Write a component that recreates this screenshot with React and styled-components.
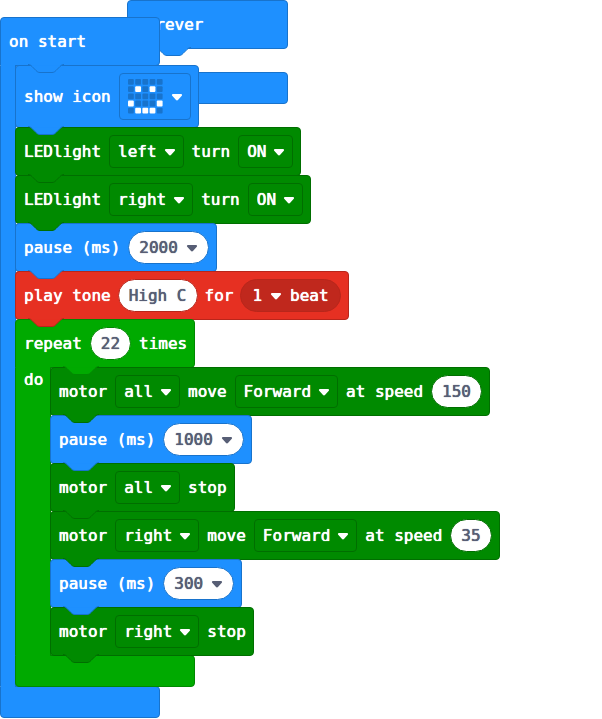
import React, { useState } from "react";
import styled, { createGlobalStyle, css } from "styled-components";

const palette = {
  basic: { fill: "#1e90ff", edge: "#1873cc" },
  motor: { fill: "#008a00", edge: "#006e00" },
  music: { fill: "#e63022", edge: "#b8261b" },
  loops: { fill: "#00aa00", edge: "#008800" },
};

const GlobalStyle = createGlobalStyle`
  * { box-sizing: border-box; }
  body { margin: 0; background: #fff; }
  body, input, select, button {
    font-family: "DejaVu Sans Mono", "Liberation Mono", monospace;
    font-size: 16px;
    line-height: 24px;
    text-shadow: 0 0 0 currentColor, 0 0 1px currentColor;
  }
`;

const Workspace = styled.main`
  position: relative;
  min-height: 100vh;
  overflow: hidden;
  color: #fff;
`;

/* A free-standing script, dropped anywhere on the canvas. */
const Script = styled.section`
  position: absolute;
  left: ${(p) => p.$x}px;
  top: ${(p) => p.$y}px;
  isolation: isolate;
`;

const surface = css`
  background: ${(p) => palette[p.$kind].fill};
  border: 1px solid ${(p) => palette[p.$kind].edge};
`;

const Row = styled.div`
  ${surface}
  position: relative;
  display: flex;
  align-items: center;
  gap: ${(p) => (p.$kind === "music" ? 7 : 8)}px;
  width: max-content;
  min-width: ${(p) => p.$min || 0}px;
  min-height: 49px;
  margin-bottom: -1px;
  padding: 7px 7px 7px 8px;
  border-radius: ${(p) => (p.$head ? "4px 4px 4px 0" : "4px")};
  white-space: pre;
`;

const TabShape = styled.svg`
  position: absolute;
  z-index: 2;
  top: 100%;
  left: ${(p) => p.$left}px;
  width: 36px;
  height: 10px;
  margin-top: -1px;
  overflow: visible;
  pointer-events: none;
`;

const Wrap = styled.div`
  display: grid;
  width: max-content;
  margin-bottom: -1px;
`;

const Mouth = styled.div`
  display: flex;
  width: 0;
  min-height: 24px;
`;

const Spine = styled.div`
  ${surface}
  border-width: 0 1px;
  position: relative;
  z-index: 1;
  flex: none;
  width: ${(p) => p.$width}px;
  padding-left: 8px;
  margin-top: 1px;

  &::before,
  &::after {
    content: "";
    position: absolute;
    left: 0;
    right: 0;
    height: 1px;
    background: ${(p) => palette[p.$kind].fill};
  }
  &::before { top: -1px; }
  &::after { bottom: -1px; }
`;

const Stack = styled.div`
  position: relative;
  flex: none;
  margin-left: -1px;
  z-index: 1;
`;

const Foot = styled.div`
  ${surface}
  height: 32px;
  border-radius: 0 4px 4px 4px;
`;

const Field = styled.span`
  position: relative;
  display: flex;
  align-items: center;
`;

const Select = styled.select`
  appearance: none;
  width: calc(${(p) => p.$chars}ch + 36px);
  height: 33px;
  margin: 0;
  padding: 0 8px;
  border: 1px solid ${(p) => palette[p.$kind].edge};
  border-radius: 4px;
  background: transparent;
  color: #fff;
  cursor: pointer;

  option { color: #575e75; }
`;

const ArrowShape = styled.svg`
  flex: none;
  width: 12px;
  height: 12px;
  fill: currentColor;
  pointer-events: none;
`;

const FieldArrow = styled(ArrowShape)`
  position: absolute;
  right: 8px;
`;

const Pill = styled.span`
  display: flex;
  align-items: center;
  gap: 8px;
  height: 33px;
  padding: 0 ${(p) => (p.$tone ? 11 : 10)}px;
  border: 1px solid ${(p) => palette[p.$kind].edge};
  border-radius: 17px;
  background: ${(p) => (p.$tone ? "#c0281d" : "#fff")};
  color: ${(p) => (p.$tone ? "#fff" : "#575e75")};
`;

const PillInput = styled.input`
  width: ${(p) => p.$chars}ch;
  margin: 0;
  padding: 0;
  border: 0;
  outline: 0;
  background: transparent;
  color: inherit;
`;

const PillSelect = styled.select`
  appearance: none;
  width: calc(${(p) => p.$chars}ch + 20px);
  margin: 0;
  padding: 0;
  border: 0;
  background: transparent;
  color: inherit;
`;

const PillFieldArrow = styled(ArrowShape)`
  position: absolute;
  right: 0;
`;

const PillButton = styled.button`
  display: flex;
  margin: 0;
  padding: 0;
  border: 0;
  background: transparent;
  color: inherit;
  cursor: pointer;
`;

const IconButton = styled.button`
  display: flex;
  align-items: center;
  gap: 8px;
  height: 47px;
  margin: 0;
  padding: 0 7px 0 8px;
  border: 1px solid ${palette.basic.edge};
  border-radius: 4px;
  background: transparent;
  color: #fff;
  cursor: pointer;
`;

const arrowPath =
  "M2 3h8c1 0 1.4 1 .8 1.7L7.2 8.8c-.7.8-1.7.8-2.4 0L1.2 4.7C.6 4 1 3 2 3z";

function Arrow({ as: Shape = ArrowShape }) {
  return (
    <Shape viewBox="0 0 12 12" aria-hidden="true">
      <path d={arrowPath} />
    </Shape>
  );
}

function Tab({ kind, left = 12 }) {
  const { fill, edge } = palette[kind];
  return (
    <TabShape $left={left} viewBox="0 0 36 10" aria-hidden="true">
      <path
        d="M0 .5c2 0 3 1 4 2l4 4c1 1 2 2 4 2h12c2 0 3-1 4-2l4-4c1-1 2-2 4-2V0H0z"
        fill={fill}
      />
      <path d="M2 0H34V1.2H2z" fill={fill} />
      <path
        d="M0 .5c2 0 3 1 4 2l4 4c1 1 2 2 4 2h12c2 0 3-1 4-2l4-4c1-1 2-2 4-2"
        fill="none"
        stroke={edge}
      />
    </TabShape>
  );
}

function Block({ kind, children }) {
  return (
    <Row $kind={kind}>
      {children}
      <Tab kind={kind} />
    </Row>
  );
}

function Container({ kind, head, min, spine = 16, label, children }) {
  return (
    <Wrap>
      <Row as="header" $kind={kind} $min={min} $head>
        {head}
        <Tab kind={kind} left={spine + 11} />
      </Row>
      <Mouth>
        <Spine $kind={kind} $width={spine}>{label}</Spine>
        <Stack>{children}</Stack>
      </Mouth>
      <Foot $kind={kind} />
    </Wrap>
  );
}

function Dropdown({ kind, label, options, initial }) {
  const [value, setValue] = useState(initial);
  return (
    <Field>
      <Select
        $kind={kind}
        $chars={value.length}
        aria-label={label}
        value={value}
        onChange={(e) => setValue(e.target.value)}
      >
        {options.map((o) => <option key={o}>{o}</option>)}
      </Select>
      <Arrow as={FieldArrow} />
    </Field>
  );
}

function Value({ kind, label, initial, menu }) {
  const [value, setValue] = useState(initial);
  return (
    <Pill $kind={kind}>
      <PillInput
        aria-label={label}
        $chars={Math.max(value.length, 1)}
        value={value}
        onChange={(e) => setValue(e.target.value)}
      />
      {menu && (
        <PillButton type="button" aria-label={`${label} presets`}>
          <Arrow />
        </PillButton>
      )}
    </Pill>
  );
}

function Beat() {
  const [value, setValue] = useState("1");
  return (
    <Pill $kind="music" $tone>
      <Field>
        <PillSelect
          id="beat"
          $chars={value.length}
          value={value}
          onChange={(e) => setValue(e.target.value)}
        >
          {["1", "2", "4"].map((o) => <option key={o}>{o}</option>)}
        </PillSelect>
        <Arrow as={PillFieldArrow} />
      </Field>
      <label htmlFor="beat">beat</label>
    </Pill>
  );
}

const face = [".....", ".#.#.", ".....", "#...#", ".###."];

function LedPicker() {
  return (
    <IconButton type="button" aria-label="icon: happy">
      <svg width="35" height="35" viewBox="0 0 35 35" aria-hidden="true">
        {face.flatMap((line, r) =>
          [...line].map((c, i) => (
            <rect
              key={`${r}-${i}`}
              x={i * 7.2}
              y={r * 7.2}
              width="5.8"
              height="5.8"
              rx="1"
              fill={c === "#" ? "#fff" : palette.basic.edge}
            />
          ))
        )}
      </svg>
      <Arrow />
    </IconButton>
  );
}

const SIDES = ["left", "right", "all"];

function Light({ side }) {
  return (
    <Block kind="motor">
      <span>LEDlight</span>
      <Dropdown kind="motor" label="light" options={SIDES} initial={side} />
      <span>turn</span>
      <Dropdown kind="motor" label="state" options={["ON", "OFF"]} initial="ON" />
    </Block>
  );
}

function Pause({ ms }) {
  return (
    <Block kind="basic">
      <span>pause (ms)</span>
      <Value kind="basic" label="pause (ms)" initial={ms} menu />
    </Block>
  );
}

function Move({ side, speed }) {
  return (
    <Block kind="motor">
      <span>motor</span>
      <Dropdown kind="motor" label="motor" options={SIDES} initial={side} />
      <span>move</span>
      <Dropdown kind="motor" label="direction" options={["Forward", "Backward"]} initial="Forward" />
      <span>at speed</span>
      <Value kind="motor" label="speed" initial={speed} />
    </Block>
  );
}

function Stop({ side }) {
  return (
    <Block kind="motor">
      <span>motor</span>
      <Dropdown kind="motor" label="motor" options={SIDES} initial={side} />
      <span>stop</span>
    </Block>
  );
}

export default function App() {
  return (
    <>
      <GlobalStyle />
      <Workspace>
        <Script $x={127} $y={0}>
          <Container kind="basic" min={161} head={<span>forever</span>} />
        </Script>
        <Script $x={0} $y={17}>
          <Container kind="basic" min={160} head={<span>on start</span>}>
            <Block kind="basic">
              <span>show icon</span>
              <LedPicker />
            </Block>
            <Light side="left" />
            <Light side="right" />
            <Pause ms="2000" />
            <Block kind="music">
              <span>play tone</span>
              <Value kind="music" label="tone" initial="High C" />
              <span>for</span>
              <Beat />
            </Block>
            <Container
              kind="loops"
              spine={36}
              label="do"
              head={
                <>
                  <span>repeat</span>
                  <Value kind="loops" label="repeat times" initial="22" />
                  <span>times</span>
                </>
              }
            >
              <Move side="all" speed="150" />
              <Pause ms="1000" />
              <Stop side="all" />
              <Move side="right" speed="35" />
              <Pause ms="300" />
              <Stop side="right" />
            </Container>
          </Container>
        </Script>
      </Workspace>
    </>
  );
}
